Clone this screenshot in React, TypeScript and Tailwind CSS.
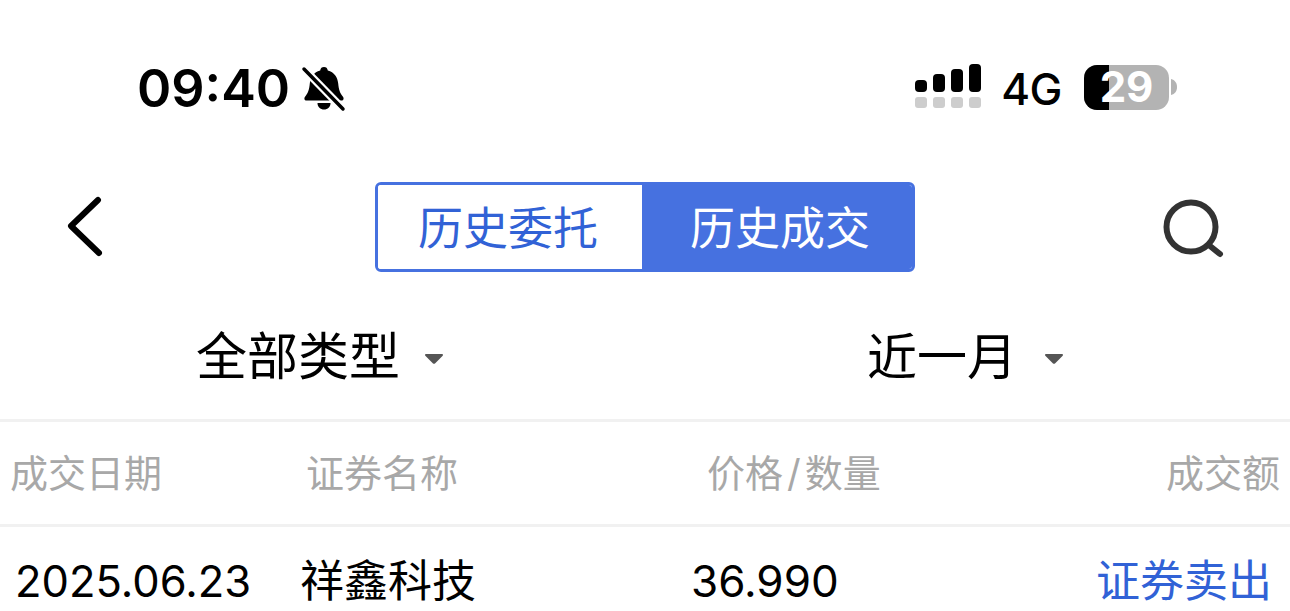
const CJK = 'font-["Inter","Noto_Sans_CJK_SC",sans-serif]';

function BellOff() {
  return (
    <svg width="46" height="46" viewBox="0 0 46 46" className="ml-[11px]">
      <path d="M23 1c2.200 0 3.400 1.200 3.800 3.400 6.400 1.600 9.800 6.600 10.400 13 .6 6.400 1.800 9.600 4.400 12.800 1.800 2.200 1 4.300-1.200 4.300H5.600c-2.200 0-3-2.100-1.200-4.300 2.600-3.200 3.800-6.400 4.400-12.800.6-6.400 4-11.400 10.400-13C19.600 2.200 20.800 1 23 1z" fill="#000" />
      <path d="M16.500 37h13c0 4-2.800 6.500-6.500 6.500S16.500 41 16.500 37z" fill="#000" />
      <path d="M3 3l39 40" stroke="#fff" strokeWidth="8" />
      <path d="M3 3l39 40" stroke="#000" strokeWidth="3.500" strokeLinecap="round" />
    </svg>
  );
}

function Signal() {
  const top = ['h-[12px]', 'h-[18px]', 'h-[23px]', 'h-[28px]'];
  return (
    <div className="flex flex-col gap-[5px] -mt-[4px]">
      <div className="flex items-end gap-[6px]">
        {top.map((h) => (
          <span key={h} className={`w-[12px] ${h} rounded-[4px] bg-black`} />
        ))}
      </div>
      <div className="flex gap-[6px]">
        {top.map((h) => (
          <span key={h} className="w-[12px] h-[11px] rounded-[3px] bg-[#cdcdcd]" />
        ))}
      </div>
    </div>
  );
}

function Battery() {
  return (
    <div className="flex items-center ml-[22px] -mt-[2px]">
      <div className="relative w-[85px] h-[45px] rounded-[13px] bg-[#b3b3b3] flex items-center justify-center">
        <div className="absolute left-0 top-0 bottom-0 w-[25px] rounded-l-[13px] bg-black" />
        <span className="relative font-['Inter',sans-serif] font-bold text-[42px] leading-none text-white">29</span>
      </div>
      <svg width="7" height="16" viewBox="0 0 7 16" className="ml-[2px]">
        <path d="M0 0c4 1 6 4 6 8s-2 7-6 8z" fill="#b3b3b3" />
      </svg>
    </div>
  );
}

function Caret() {
  return (
    <svg width="18" height="10" viewBox="0 0 18 10">
      <path d="M1 0h16c1 0 1.300 1 .7 1.700L10 9.400c-.6.600-1.400.600-2 0L.3 1.700C-.3 1 0 0 1 0z" fill="#555" />
    </svg>
  );
}

export default function App() {
  return (
    <div className={`w-[1290px] h-[611px] bg-white overflow-hidden ${CJK}`}>
      {/* status bar */}
      <div className="h-[182px] pt-[64px] pl-[137px] pr-[112px] flex items-start justify-between">
        <div className="flex items-center h-[50px]">
          <span className="text-[52px] leading-none font-semibold text-black">09:40</span>
          <BellOff />
        </div>
        <div className="flex items-center h-[50px] -mt-[1px]">
          <Signal />
          <span className="ml-[20px] mt-[2px] text-[44px] leading-none font-medium tracking-[-0.5px] text-black">4G</span>
          <Battery />
        </div>
      </div>

      {/* nav */}
      <div className="relative h-[90px] flex justify-center">
        <svg width="40" height="64" viewBox="0 0 40 64" className="absolute left-[65px] top-[13px]">
          <path d="M33 5L6 31l28 27" fill="none" stroke="#000" strokeWidth="6" strokeLinecap="round" strokeLinejoin="round" />
        </svg>
        <div className="flex w-[540px] h-[90px] rounded-[6px] border-[3px] border-[#4671e0] overflow-hidden">
          <div className="w-[264px] pr-[4px] pt-[3px] flex items-center justify-center text-[45px] text-[#3162d6] bg-white">历史委托</div>
          <div className="flex-1 pl-[6px] pt-[3px] flex items-center justify-center text-[45px] text-white bg-[#4671e0]">历史成交</div>
        </div>
        <svg width="64" height="64" viewBox="0 0 64 64" className="absolute left-[1160px] top-[14px]">
          <circle cx="31" cy="31" r="24.500" fill="none" stroke="#333" strokeWidth="6" />
          <path d="M50 50l10 8" stroke="#333" strokeWidth="6" strokeLinecap="round" />
        </svg>
      </div>

      {/* filters */}
      <div className="h-[147px] flex items-start">
        <div className="pt-[53px] flex items-center h-[116px] pl-[196px]">
          <span className="text-[51px] leading-none text-black">全部类型</span>
          <span className="ml-[25px] mt-[5px]"><Caret /></span>
        </div>
        <div className="pt-[53px] flex items-center h-[116px] ml-[424px]">
          <span className="text-[50px] leading-none text-black">近一月</span>
          <span className="ml-[28px] mt-[5px]"><Caret /></span>
        </div>
      </div>

      {/* table header */}
      <div className="h-[108px] pt-[1px] border-t-[3px] border-b-[3px] border-[#f1f1f1] flex items-center justify-between text-[38px] text-[#a8a8a8] pl-[10px] pr-[10px]">
        <span className="w-[296px]">成交日期</span>
        <span className="w-[401px]">证券名称</span>
        <span className="flex-1">价格<span className="mx-[4px]">/</span>数量</span>
        <span>成交额</span>
      </div>

      {/* row */}
      <div className="h-[110px] pt-[26px] flex items-start justify-between text-[44px] leading-[56px] text-black pl-[15px] pr-[18px]">
        <span className="w-[285px] text-[43.500px]">2025.06.23</span>
        <span className="w-[391px]">祥鑫科技</span>
        <span className="flex-1">36.990</span>
        <span className="text-[#3162d6]">证券卖出</span>
      </div>
    </div>
  );
}
